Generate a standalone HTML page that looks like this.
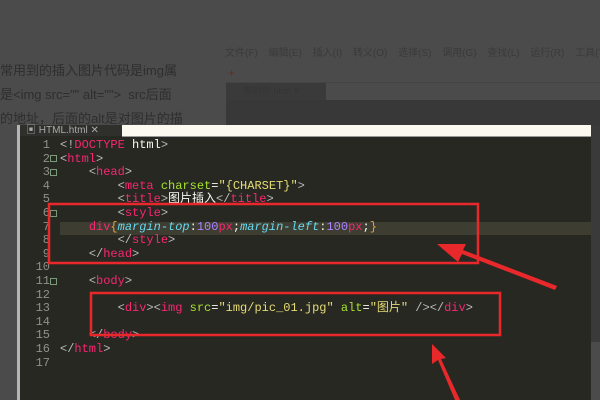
<!DOCTYPE html>
<html><head><meta charset="utf-8"><style>
body{margin:0;width:600px;height:400px;background:#4b4b4b;position:relative;overflow:hidden;font-family:"Liberation Sans","Noto Sans CJK SC",sans-serif}
.dim{position:absolute;color:#2e2e2e;font-size:13px;white-space:nowrap}
.menu{position:absolute;left:225px;top:44px;width:375px;overflow:hidden;color:#3a3a3a;font-size:10px;white-space:nowrap;word-spacing:8px}
.ed{position:absolute;left:20px;top:125px;width:571px;height:275px;background:#272822}
.frame{position:absolute;left:17px;top:125px;width:3px;height:275px;background:#b5b5b5}
.tab{position:absolute;left:20px;top:125px;width:102px;height:11px;background:#2f302b;color:#aaa;font-size:10px;line-height:11px;padding-left:6px;box-sizing:border-box}
.cream{position:absolute;left:122px;top:125px;width:469px;height:11px;background:#fbf9f0;border-bottom:1px solid #999}
.code{position:absolute;left:60px;top:139px;font-family:"Liberation Mono","Noto Sans CJK SC",monospace;font-size:12px;line-height:13.6px;color:#f8f8f2;white-space:pre}
.ln{position:absolute;left:20px;top:139px;width:30px;text-align:right;font-family:"Liberation Mono",monospace;font-size:12px;line-height:13.6px;color:#8f908a;white-space:pre}
.t{color:#f92672}.a{color:#a6e22e}.s{color:#e6db74}.p{color:#66d9ef;font-style:italic}.n{color:#ae81ff}.g{color:#bbb}
.hl{position:absolute;left:60px;top:222px;width:531px;height:13px;background:#3e3d32}
.right{position:absolute;left:591px;top:125px;width:9px;height:217px;background:#3a3a3a}
</style></head><body>
<div class="dim" style="left:0;top:60px">常用到的插入图片代码是img属</div>
<div class="dim" style="left:0;top:84px">是&lt;img src="" alt=""&gt;&nbsp; src后面</div>
<div class="dim" style="left:0;top:108px">的地址，后面的alt是对图片的描</div>
<div class="menu">文件(F) 编辑(E) 插入(I) 转义(O) 选择(S) 调用(G) 查找(L) 运行(R) 工具(T) 工具(B)</div>
<div style="position:absolute;left:226px;top:82px;width:374px;height:1px;background:#444"></div>
<div style="position:absolute;left:226px;top:83px;width:100px;height:17px;background:#3a3a3a;color:#353535;font-size:9px;line-height:17px;padding-left:18px;box-sizing:border-box">图制作.html ✕</div>
<div style="position:absolute;left:226px;top:100px;width:374px;height:25px;background:#383838"></div>
<div style="position:absolute;left:228px;top:66px;color:#6a2a22;font-size:12px">+</div>
<div class="ed"></div><div class="frame"></div>
<div class="tab">▣ HTML.html ✕</div><div class="cream"></div>
<div class="right"></div>
<div class="hl"></div>
<div class="ln">1
2
3
4
5
6
7
8
9
10
11
12
13
14
15
16
17</div>
<div class="code"><span class="g">&lt;!</span><span class="t">DOCTYPE</span> html<span class="g">&gt;</span>
<span class="g">&lt;</span><span class="t">html</span><span class="g">&gt;</span>
    <span class="g">&lt;</span><span class="t">head</span><span class="g">&gt;</span>
        <span class="g">&lt;</span><span class="t">meta</span> <span class="a">charset</span>=<span class="s">"{CHARSET}"</span><span class="g">&gt;</span>
        <span class="g">&lt;</span><span class="t">title</span><span class="g">&gt;</span>图片插入<span class="g">&lt;/</span><span class="t">title</span><span class="g">&gt;</span>
        <span class="g">&lt;</span><span class="t">style</span><span class="g">&gt;</span>
    <span class="t">div</span><span style="color:#e6a23c">{</span><span class="p">margin-top</span>:<span class="n">100</span><span class="t">px</span>;<span class="p">margin-left</span>:<span class="n">100</span><span class="t">px</span>;<span style="color:#e6a23c">}</span>
        <span class="g">&lt;/</span><span class="t">style</span><span class="g">&gt;</span>
    <span class="g">&lt;/</span><span class="t">head</span><span class="g">&gt;</span>

    <span class="g">&lt;</span><span class="t">body</span><span class="g">&gt;</span>

        <span class="g">&lt;</span><span class="t">div</span><span class="g">&gt;&lt;</span><span class="t">img</span> <span class="a">src</span>=<span class="s">"img/pic_01.jpg"</span> <span class="a">alt</span>=<span class="s">"图片"</span> <span class="g">/&gt;&lt;/</span><span class="t">div</span><span class="g">&gt;</span>

    <span class="g">&lt;/</span><span class="t">body</span><span class="g">&gt;</span>
<span class="g">&lt;/</span><span class="t">html</span><span class="g">&gt;</span></div>
<svg width="600" height="400" style="position:absolute;left:0;top:0">
<g fill="none" stroke="#7a9a7a" stroke-width="1">
<rect x="50.5" y="155.5" width="6" height="6"/><rect x="50.5" y="169.5" width="6" height="6"/><rect x="50.5" y="210.5" width="6" height="6"/><rect x="50.5" y="278.5" width="6" height="6"/>
</g>
<g fill="none" stroke="#e8282a" stroke-width="2.5">
<rect x="49" y="204" width="429" height="59"/>
<rect x="91" y="293" width="409" height="42"/>
</g>
<g fill="#e8282a">
<polygon points="557,286 555,290 462,254 458,262 437,244 466,244 463,250"/>
<polygon points="460,400 455,400 438,360 432,364 432,344 446,358 441,359"/>
</g>
</svg>
</body></html>
